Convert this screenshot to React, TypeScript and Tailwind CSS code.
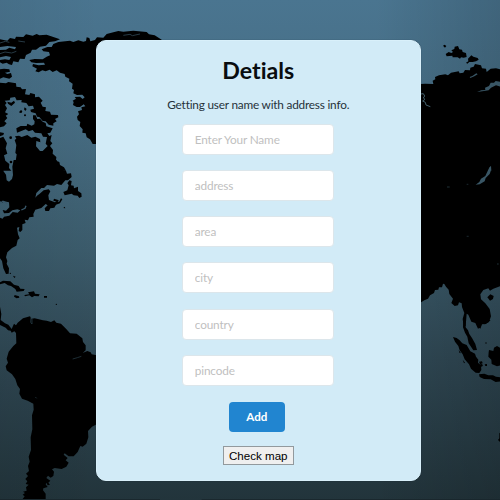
import React from "react";

const fields = ["Enter Your Name", "address", "area", "city", "country", "pincode"];

function WorldMap() {
  return (
    <svg className="absolute inset-0 h-full w-full" viewBox="0 0 1500 1500" aria-hidden="true">
      <defs>
        <linearGradient id="sea" x1="0" y1="0" x2="0" y2="1">
          <stop offset="0" stopColor="#4a7590" />
          <stop offset="0.25" stopColor="#466c82" />
          <stop offset="0.5" stopColor="#3b5b6b" />
          <stop offset="0.72" stopColor="#2f4753" />
          <stop offset="1" stopColor="#22343b" />
        </linearGradient>
        <linearGradient id="shade" x1="0" y1="0" x2="1" y2="0">
          <stop offset="0" stopColor="#000" stopOpacity="0.06" />
          <stop offset="0.2" stopColor="#000" stopOpacity="0" />
          <stop offset="0.75" stopColor="#000" stopOpacity="0" />
          <stop offset="1" stopColor="#000" stopOpacity="0.14" />
        </linearGradient>
      </defs>
      <rect width="1500" height="1500" fill="url(#sea)" />
      <rect width="1500" height="1500" fill="url(#shade)" />

      {/* Arctic islands, Greenland and northern Canada */}
      <g fill="#000">
        <path d="M0 118L22 122 30 114 45 117 48 110 70 111 78 103 98 107 110 102 118 106 140 104 160 111 180 118 165 124 148 126 138 137 120 140 108 149 96 149 92 158 78 165 74 177 60 176 55 187 40 184 36 195 27 193 20 188 8 191 0 187V180L15 178 28 180 33 171 18 168 0 172V150L18 149 28 143 45 148 48 141 22 138 0 141Z" />
        <path d="M0 208L12 206 28 208 30 215 15 218 22 222 33 219 36 230 28 236 10 232 0 236Z" />
        <path d="M88 180L104 177 128 178 140 170 150 166 147 156 130 154 125 148 142 141 155 141 160 132 175 126 210 122 220 126 235 121 250 125 258 123 260 112 268 114 271 124 285 120 291 112 310 113 320 102 340 97 355 93 370 95 400 92 440 96 447 103 464 106 485 119V180H290V432H278L270 418 260 412 257 400 247 398 248 388 239 378 241 366 233 360 231 350 237 343 234 334 246 330 244 322 256 319 251 313 240 321 230 321 219 315 221 306 218 302 228 296 224 291 240 290 248 297 254 292 247 284 231 285 220 280 222 270 216 266 218 251 207 244 208 236 196 230 194 222 180 218 170 211 158 216 149 209 137 214 127 211 116 217 106 214 111 206 97 199 99 192 116 196 135 194 132 188 108 189 94 187Z" />
        <path d="M0 248L18 250 25 246 48 250 49 260 62 262 66 268 78 267 75 283 88 285 91 279 105 283 105 292 117 290 128 302 122 308 128 320 138 322 136 333 150 335 153 344 174 345 175 352 165 357 170 364 160 370 160 377 146 374 137 364 128 363 118 351 111 350 107 340 93 336 91 329 102 326 99 317 86 319 79 309 64 307 65 300 50 301 45 291 31 293 29 301 14 302 20 309 15 315 21 325 15 337 25 342 17 347 22 354 13 364 20 370 12 379 0 382Z" />
        <path d="M59 333L64 330 67 335 64 339 58 338ZM74 322L80 327 76 333 72 328ZM34 318L45 308 42 302 34 308 22 305 24 311ZM99 357L99 346 107 346 112 357 120 356 128 365 137 369 139 379 158 385 151 398 142 400 148 408 155 405 151 423 157 430 150 438 159 450 158 461 169 471 168 482 178 486 180 495 192 502 198 512H48L48 500 53 491 47 484 50 463 46 459 49 435 44 420 49 416 45 409 57 407 65 411 82 405 94 413 106 410 120 417 121 427 109 423 108 439 120 453 128 453 143 438 137 431 141 411 129 410 124 400 105 398 98 390 86 394 77 388 51 398 49 385 62 378 80 378 82 371 95 377 103 373 104 364Z" />
        <path d="M0 397L12 399 10 405 0 409ZM0 414L10 410 21 430 17 445 22 461 12 466 16 482 28 492 27 504 34 512H0Z" />
        <circle cx="32" cy="413" r="4" /><circle cx="33" cy="486" r="4" /><circle cx="75" cy="346" r="3" />
      </g>
      <path d="M370 106l20-3 7 4 23-5M0 129l16-5 12 3M55 123l20 3M0 161l15-5 20 3 14 -5" stroke="#263944" strokeWidth="3" fill="none" />

      {/* Eastern North America and the Caribbean */}
      <g transform="translate(0 480)" fill="#000">
        <path fillRule="evenodd" d="M0 0H170L173 14 184 22 184 29 198 32 201 41 213 40 215 51 204 61 196 61 184 75 171 72 162 77 141 75 132 84 124 84 109 99 106 113 111 107 119 101 131 91 146 88 151 94 145 106 147 120 165 127 171 122 177 126 183 115 187 118 180 130 168 134 163 143 151 145 147 153 136 153 134 145 143 136 137 132 124 144 106 149 100 162 101 170 88 172 84 181 74 179 77 189 67 193 67 210 61 216 56 213 58 201 51 203 54 223 59 235 53 240 49 257 36 264 22 277 18 292 22 303 20 311 27 325 26 341 18 342 10 325 6 303 0 295ZM12 0L15 15 10 33 18 44 20 61 27 65 36 57 39 45 37 20 41 0ZM0 123L7 128 13 124 27 127 28 142 18 152 8 150 12 160 27 159 37 151 52 148 61 151 53 158 38 156 28 167 12 170 8 176 0 173Z" />
        <path d="M190 96L202 91 206 76 202 70 208 61 215 63 213 76 221 77 222 85 234 80 234 93 244 100 245 110 238 114 233 107 221 106 215 101 194 106ZM162 116l15 5-6 4-11-3ZM190 144l4-4 2 5Z" />
        <path d="M0 367L9 362 31 364 42 374 56 378 61 386 74 387 71 393 50 395 46 387 33 378 24 376 14 369 0 373ZM44 405L57 409 58 413 50 415 42 410ZM84 397L102 394 105 401 119 403 116 409 103 408 96 412 88 406 75 409 73 405 88 403ZM132 408h9v5h-9ZM39 347l8 3-4 4Z" />
        <circle cx="31" cy="340" r="2" /><circle cx="169" cy="433" r="2" />
      </g>
      <path d="M0 610l9-6 13 7M64 630l11-5 3-8" stroke="#39586a" strokeWidth="4" fill="none" />

      {/* South America */}
      <g transform="translate(0 960)" fill="#000">
        <path d="M0 -40L4 -18 2 0 15 10 25 14 35 27 42 11 48 16 53 8 69 -5 90 -11 94 -4 104 -5 129 1 140 2 153 6 163 1 169 8 183 11 198 26 210 40 230 41 247 55 249 66 257 76 257 91 248 99 262 93 272 97 275 103 290 106V313L276 320 264 333 265 352 259 371 248 380 241 378 233 396 221 409 206 409 194 400 191 404 203 414 197 421 206 428 199 440 185 447 164 444 156 448 162 455 160 468 152 473 144 467 139 474 151 482 145 488 150 494 143 496 139 488 137 493 143 501 130 505 129 511 137 521 137 537H68L74 529 68 524 75 519 69 515 80 512 78 502 86 494 77 492 82 484 76 477 84 468 78 461 87 453 84 438 89 425 86 410 93 390 92 352 97 328 96 286 101 269 100 251 83 242 66 236 58 221 60 207 52 196 46 177 36 163 20 151 17 139 24 128 20 116 26 95 40 78 49 70 48 39 43 34 35 38 32 32 24 31 17 23 0 15Z" />
      </g>
      <path d="M93 953l3 2v17l-4-5ZM218 1077l14-4 12-4M106 1191l4 4" stroke="#2c444e" strokeWidth="2" fill="none" />

      {/* Asia and the northern Russian coast */}
      <g transform="translate(1230 0)">
        <g fill="#000">
          <path d="M99 137l5-3 5 4-4 5ZM124 151L133 147 134 140 144 138 148 148 156 149 158 156 168 159 170 171 161 173 153 172 150 176 143 172 128 172 127 167 110 169 107 162 116 156 124 159 129 156ZM168 188L175 184 174 176 184 166 190 170 203 174 206 179 198 184 188 186 178 186 172 191Z" />
          <path d="M20 253L45 251 70 252 68 242 76 238 75 231 87 226 106 223 114 226 123 218 146 214 149 220 160 218 165 210 180 211 181 203 191 200 195 192 213 196 216 205 228 206 230 216 242 206 258 205 272 208V858L250 866 240 872 235 865 220 870 211 883 213 898 226 910 239 927 243 949 237 966 225 973 214 970 213 981 204 986 196 969 184 965 175 944 170 941 167 978 161 978 158 957 163 939 156 921 155 910 147 907 144 916 134 918 124 909 129 896 118 882 116 869 108 860 103 852 99 851 96 862 87 862 85 869 75 870 72 879 60 886 54 896 43 901 31 908 20 915Z" />
        </g>
        <path d="M32 282L40 281 44 288 40 294 45 298 38 303 46 307 48 315 61 320" stroke="#43606c" strokeWidth="3" fill="none" />
        <path d="M201 276L214 271 226 270 225 263 237 258 242 248 252 248 257 243 272 246V260L258 256 243 263 236 271 222 273Z" fill="#395665" />
        <path d="M181 234l12-5 10-6-4-3-12 8-8 3M237 512l2-10 4-5 1 15ZM239 500l3 14-3 8-12 12-3 10-15 9-12 1 11-8 5-10 13-8Z" fill="#395665" />
        <path d="M111 561h8M170 553h5M170 709h6M261 792h5" stroke="#152025" strokeWidth="4" />
        <path d="M232 892L241 883 251 888 249 897 240 902Z" fill="#000" />
      </g>

      {/* Southeast Asian archipelago */}
      <g transform="translate(1230 960)" fill="#000">
        <path d="M160 0L159 22 165 38 172 50 176 70 190 91 201 90 196 72 186 54 178 42 174 31 167 22 167 0ZM190 0L204 10 205 22 211 26 216 13 227 12 242 0ZM129 51L140 54 149 61 157 70 170 75 181 94 195 101 198 110 205 119 204 128 213 136 214 150 208 159 197 158 183 146 177 133 164 118 158 103 149 91 145 78 135 65ZM207 163L223 161 235 166 249 166 258 170 272 172V184L257 186 242 178 222 177 209 171ZM236 97L237 90 250 93 252 83 261 78 272 84V136L261 139 245 132 244 119 235 110ZM207 125l9-1 2 6-8 3ZM224 133l7-1v6h-5ZM158 119l7 9-3 2ZM146 90l7 10-5-2ZM268 340l4-3v31l-8-8 4-5Z" />
        <circle cx="214" cy="136" r="4" /><circle cx="228" cy="69" r="2" />
      </g>
      <path d="M0 1499H480M605 1499H1500" stroke="#1a262c" strokeWidth="3" />
    </svg>
  );
}

export default function App() {
  return (
    <main className="relative h-[500px] w-[500px] overflow-hidden bg-[#39586a] pl-[95.5px] pt-[39.5px] font-['Lato',sans-serif] [font-variant-ligatures:none]">
      <WorldMap />
      <section className="relative flex h-[441.5px] w-[325.5px] flex-col items-center rounded-[10px] border border-[#d9f0fa] bg-[#d2ebf7] shadow-[0_0_1px_rgba(5,24,38,0.6)]">
        <h1 className="mt-[14.5px] text-[23.2px] font-bold leading-[30px] text-[#090d10]">Detials</h1>
        <p className="mt-[10.6px] text-[11.8px] leading-[18px] tracking-[-0.2px] text-[#26323a]">Getting user name with address info.</p>
        <form className="mt-[10px] flex flex-col items-center" onSubmit={(event) => event.preventDefault()}>
          <div className="flex flex-col gap-[15.3px]">
            {fields.map((label) => (
              <input
                key={label}
                aria-label={label}
                placeholder={label}
                className="h-[31px] w-[152px] rounded-[4px] border border-[#dce6eb] bg-white px-[11.5px] text-[11.8px] tracking-[-0.15px] text-[#26323a] outline-none placeholder:text-[#bfbfbf]"
              />
            ))}
          </div>
          <button type="button" className="mr-[3px] mt-[15.9px] h-[30px] w-[56px] rounded-[4px] bg-[#2185d0] text-[11.6px] font-bold text-white">Add</button>
          <button type="button" className="mt-[14.4px] h-[18.5px] w-[71px] border border-[#92999d] bg-[#efefef] font-['Liberation_Sans',Arial,sans-serif] text-[11.6px] leading-[16px] text-black">Check map</button>
        </form>
      </section>
    </main>
  );
}
